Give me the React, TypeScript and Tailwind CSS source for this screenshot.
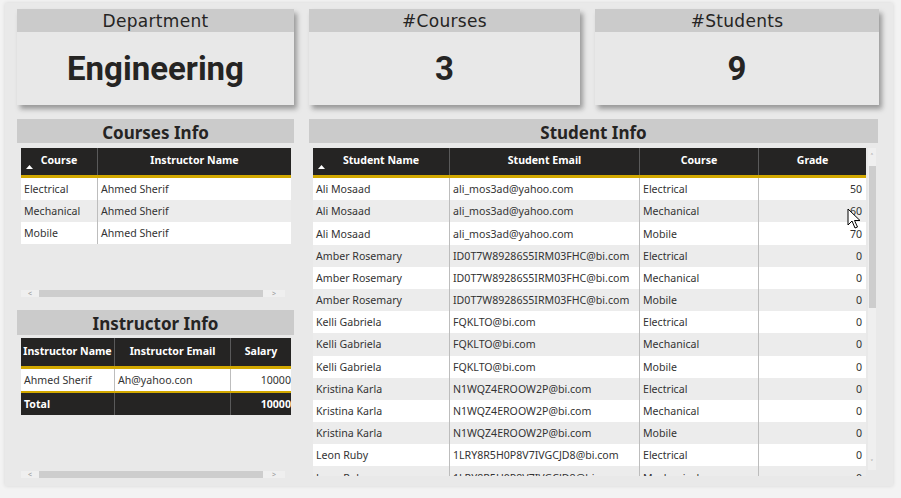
import React from "react";

const students = [
  ["Ali Mosaad", "ali_mos3ad@yahoo.com", "Electrical", "50"],
  ["Ali Mosaad", "ali_mos3ad@yahoo.com", "Mechanical", "60"],
  ["Ali Mosaad", "ali_mos3ad@yahoo.com", "Mobile", "70"],
  ["Amber Rosemary", "ID0T7W89286S5IRM03FHC@bi.com", "Electrical", "0"],
  ["Amber Rosemary", "ID0T7W89286S5IRM03FHC@bi.com", "Mechanical", "0"],
  ["Amber Rosemary", "ID0T7W89286S5IRM03FHC@bi.com", "Mobile", "0"],
  ["Kelli Gabriela", "FQKLTO@bi.com", "Electrical", "0"],
  ["Kelli Gabriela", "FQKLTO@bi.com", "Mechanical", "0"],
  ["Kelli Gabriela", "FQKLTO@bi.com", "Mobile", "0"],
  ["Kristina Karla", "N1WQZ4EROOW2P@bi.com", "Electrical", "0"],
  ["Kristina Karla", "N1WQZ4EROOW2P@bi.com", "Mechanical", "0"],
  ["Kristina Karla", "N1WQZ4EROOW2P@bi.com", "Mobile", "0"],
  ["Leon Ruby", "1LRY8R5H0P8V7IVGCJD8@bi.com", "Electrical", "0"],
  ["Leon Ruby", "1LRY8R5H0P8V7IVGCJD8@bi.com", "Mechanical", "0"],
];

const courses = [
  ["Electrical", "Ahmed Sherif"],
  ["Mechanical", "Ahmed Sherif"],
  ["Mobile", "Ahmed Sherif"],
];

const tableFont = { fontFamily: '"Noto Sans", "Open Sans", sans-serif' };

function Card({ title, value, w }: { title: string; value: string; w: string }) {
  return (
    <div className={`${w} h-[96px] flex flex-col shadow-[3px_4px_5px_rgba(0,0,0,0.35)]`}>
      <div className="h-[23px] bg-[#cbcbcb] flex items-center justify-center pt-[3px] text-[17px] text-[#252423] tracking-[0.3px]" style={{ fontFamily: '"DejaVu Sans", sans-serif' }}>{title}</div>
      <div className="flex-1 bg-[#e8e8e8] flex items-center justify-center text-[33px] font-bold text-[#252423]" style={{ fontFamily: 'Roboto, "DejaVu Sans", sans-serif' }}>{value}</div>
    </div>
  );
}

function SectionTitle({ text, h }: { text: string; h: string }) {
  return (
    <div className={`${h} bg-[#cbcbcb] flex items-center justify-center pt-[3px] text-[17px] font-bold text-[#252423]`} style={tableFont}>
      {text}
    </div>
  );
}

function SortArrow() {
  return (
    <svg className="absolute left-[5px] bottom-[6px]" width="7" height="4" viewBox="0 0 7 4">
      <path d="M0 4 L3.5 0 L7 4 Z" fill="#fff" />
    </svg>
  );
}

function HScroll() {
  return (
    <div className="w-[264px] h-[7px] flex items-center bg-[#efefef] text-[#999] text-[7px] leading-none">
      <div className="w-[18px] flex justify-center">&lt;</div>
      <div className="w-[224px] h-[7px] bg-[#cdcdcd]" />
      <div className="flex-1 flex justify-center">&gt;</div>
    </div>
  );
}

function Cursor() {
  return (
    <svg className="absolute left-[847px] top-[208px]" width="14" height="22" viewBox="0 0 14 22">
      <path d="M1 1 L1 17 L5 13 L8 20 L10.5 19 L7.5 12.5 L13 12.5 Z" fill="#fff" stroke="#000" strokeWidth="1" strokeLinejoin="round" />
    </svg>
  );
}

export default function App() {
  return (
    <div className="w-[901px] h-[498px] bg-[#f3f3f3] relative overflow-hidden pt-[3px] pl-[5px]">
      <div className="w-[888px] h-[483px] bg-[#e9e9e9] shadow-[0_0_4px_rgba(0,0,0,0.12)] pt-[6px] pl-[12px]">
        <div className="flex gap-[15px]">
          <Card title="Department" value="Engineering" w="w-[277px]" />
          <Card title="#Courses" value="3" w="w-[271px]" />
          <Card title="#Students" value="9" w="w-[284px]" />
        </div>

        <div className="mt-[14px] flex gap-[15px]">
          {/* left column */}
          <div className="w-[277px] flex flex-col">
            <SectionTitle text="Courses Info" h="h-[24px]" />
            <div className="pl-[4px] pt-[5px]" style={tableFont}>
              <div className="w-[270px] text-[10.6px]">
                <div className="flex h-[30px] bg-[#252423] border-b-[3px] border-[#d2a800] text-white font-bold">
                  <div className="relative w-[77px] border-r border-[#5a5a5a] flex justify-center pt-[5px]">
                    Course
                    <SortArrow />
                  </div>
                  <div className="flex-1 flex justify-center pt-[5px]">Instructor Name</div>
                </div>
                {courses.map((c, i) => (
                  <div key={i} className={`flex h-[22px] text-[#333] ${i % 2 ? "bg-[#ececec]" : "bg-white"}`}>
                    <div className="w-[77px] flex items-center pl-[3px] pt-[2px] border-r border-[#bdbdbd]">{c[0]}</div>
                    <div className="flex-1 flex items-center pl-[3px] pt-[2px]">{c[1]}</div>
                  </div>
                ))}
              </div>
              <div className="mt-[46px]">
                <HScroll />
              </div>
            </div>

            <div className="mt-[13px]">
              <SectionTitle text="Instructor Info" h="h-[25px]" />
            </div>
            <div className="pl-[4px] pt-[3px]" style={tableFont}>
              <div className="w-[270px] text-[10.6px] overflow-hidden">
                <div className="flex h-[31px] bg-[#252423] border-b-[3px] border-[#d2a800] text-white font-bold whitespace-nowrap">
                  <div className="w-[94px] border-r border-[#5a5a5a] flex justify-center pt-[6px]">Instructor Name</div>
                  <div className="w-[116px] border-r border-[#5a5a5a] flex justify-center pt-[6px]">Instructor Email</div>
                  <div className="flex-1 flex justify-center pt-[6px]">Salary</div>
                </div>
                <div className="flex h-[24px] bg-white border-b-[2px] border-[#d2a800] text-[#333] whitespace-nowrap">
                  <div className="w-[94px] border-r border-[#bdbdbd] flex items-center pl-[3px] pt-[2px]">Ahmed Sherif</div>
                  <div className="w-[116px] border-r border-[#bdbdbd] flex items-center pl-[3px] pt-[2px]">Ah@yahoo.con</div>
                  <div className="flex-1 flex items-center justify-end pt-[2px]">10000</div>
                </div>
                <div className="flex h-[22px] bg-[#252423] text-white font-bold whitespace-nowrap">
                  <div className="w-[94px] border-r border-[#5a5a5a] flex items-center pl-[3px] pt-[2px]">Total</div>
                  <div className="w-[116px] border-r border-[#5a5a5a]" />
                  <div className="flex-1 flex items-center justify-end pt-[2px]">10000</div>
                </div>
              </div>
              <div className="mt-[56px]">
                <HScroll />
              </div>
            </div>
          </div>

          {/* right column */}
          <div className="w-[569px] flex flex-col">
            <SectionTitle text="Student Info" h="h-[24px]" />
            <div className="flex pl-[4px] pt-[5px]" style={tableFont}>
              <div className="w-[553px] h-[328px] overflow-hidden text-[10.6px]">
                <div className="flex h-[30px] bg-[#252423] border-b-[3px] border-[#d2a800] text-white font-bold">
                  <div className="relative w-[137px] border-r border-[#5a5a5a] flex justify-center pt-[5px]">
                    Student Name
                    <SortArrow />
                  </div>
                  <div className="w-[190px] border-r border-[#5a5a5a] flex justify-center pt-[5px]">Student Email</div>
                  <div className="w-[119px] border-r border-[#5a5a5a] flex justify-center pt-[5px]">Course</div>
                  <div className="flex-1 flex justify-center pt-[5px]">Grade</div>
                </div>
                {students.map((s, i) => (
                  <div key={i} className={`flex h-[22.2px] text-[#333] ${i % 2 ? "bg-[#ececec]" : "bg-white"}`}>
                    <div className="w-[137px] border-r border-[#bdbdbd] flex items-center pl-[3px] pt-[2px]">{s[0]}</div>
                    <div className="w-[190px] border-r border-[#bdbdbd] flex items-center pl-[3px] pt-[2px]">{s[1]}</div>
                    <div className="w-[119px] border-r border-[#bdbdbd] flex items-center pl-[3px] pt-[2px]">{s[2]}</div>
                    <div className="flex-1 flex items-center justify-end pr-[4px] pt-[2px]">{s[3]}</div>
                  </div>
                ))}
              </div>
              <div className="ml-[2px] w-[8px] h-[322px] bg-[#efefef] flex flex-col items-center text-[#888] text-[8px] leading-none">
                <div className="h-[18px] flex items-center">&#x02C4;</div>
                <div className="w-[7px] h-[142px] bg-[#cdcdcd]" />
                <div className="flex-1" />
                <div className="h-[14px] flex items-center">&#x02C5;</div>
              </div>
            </div>
          </div>
        </div>
      </div>
      <Cursor />
    </div>
  );
}
